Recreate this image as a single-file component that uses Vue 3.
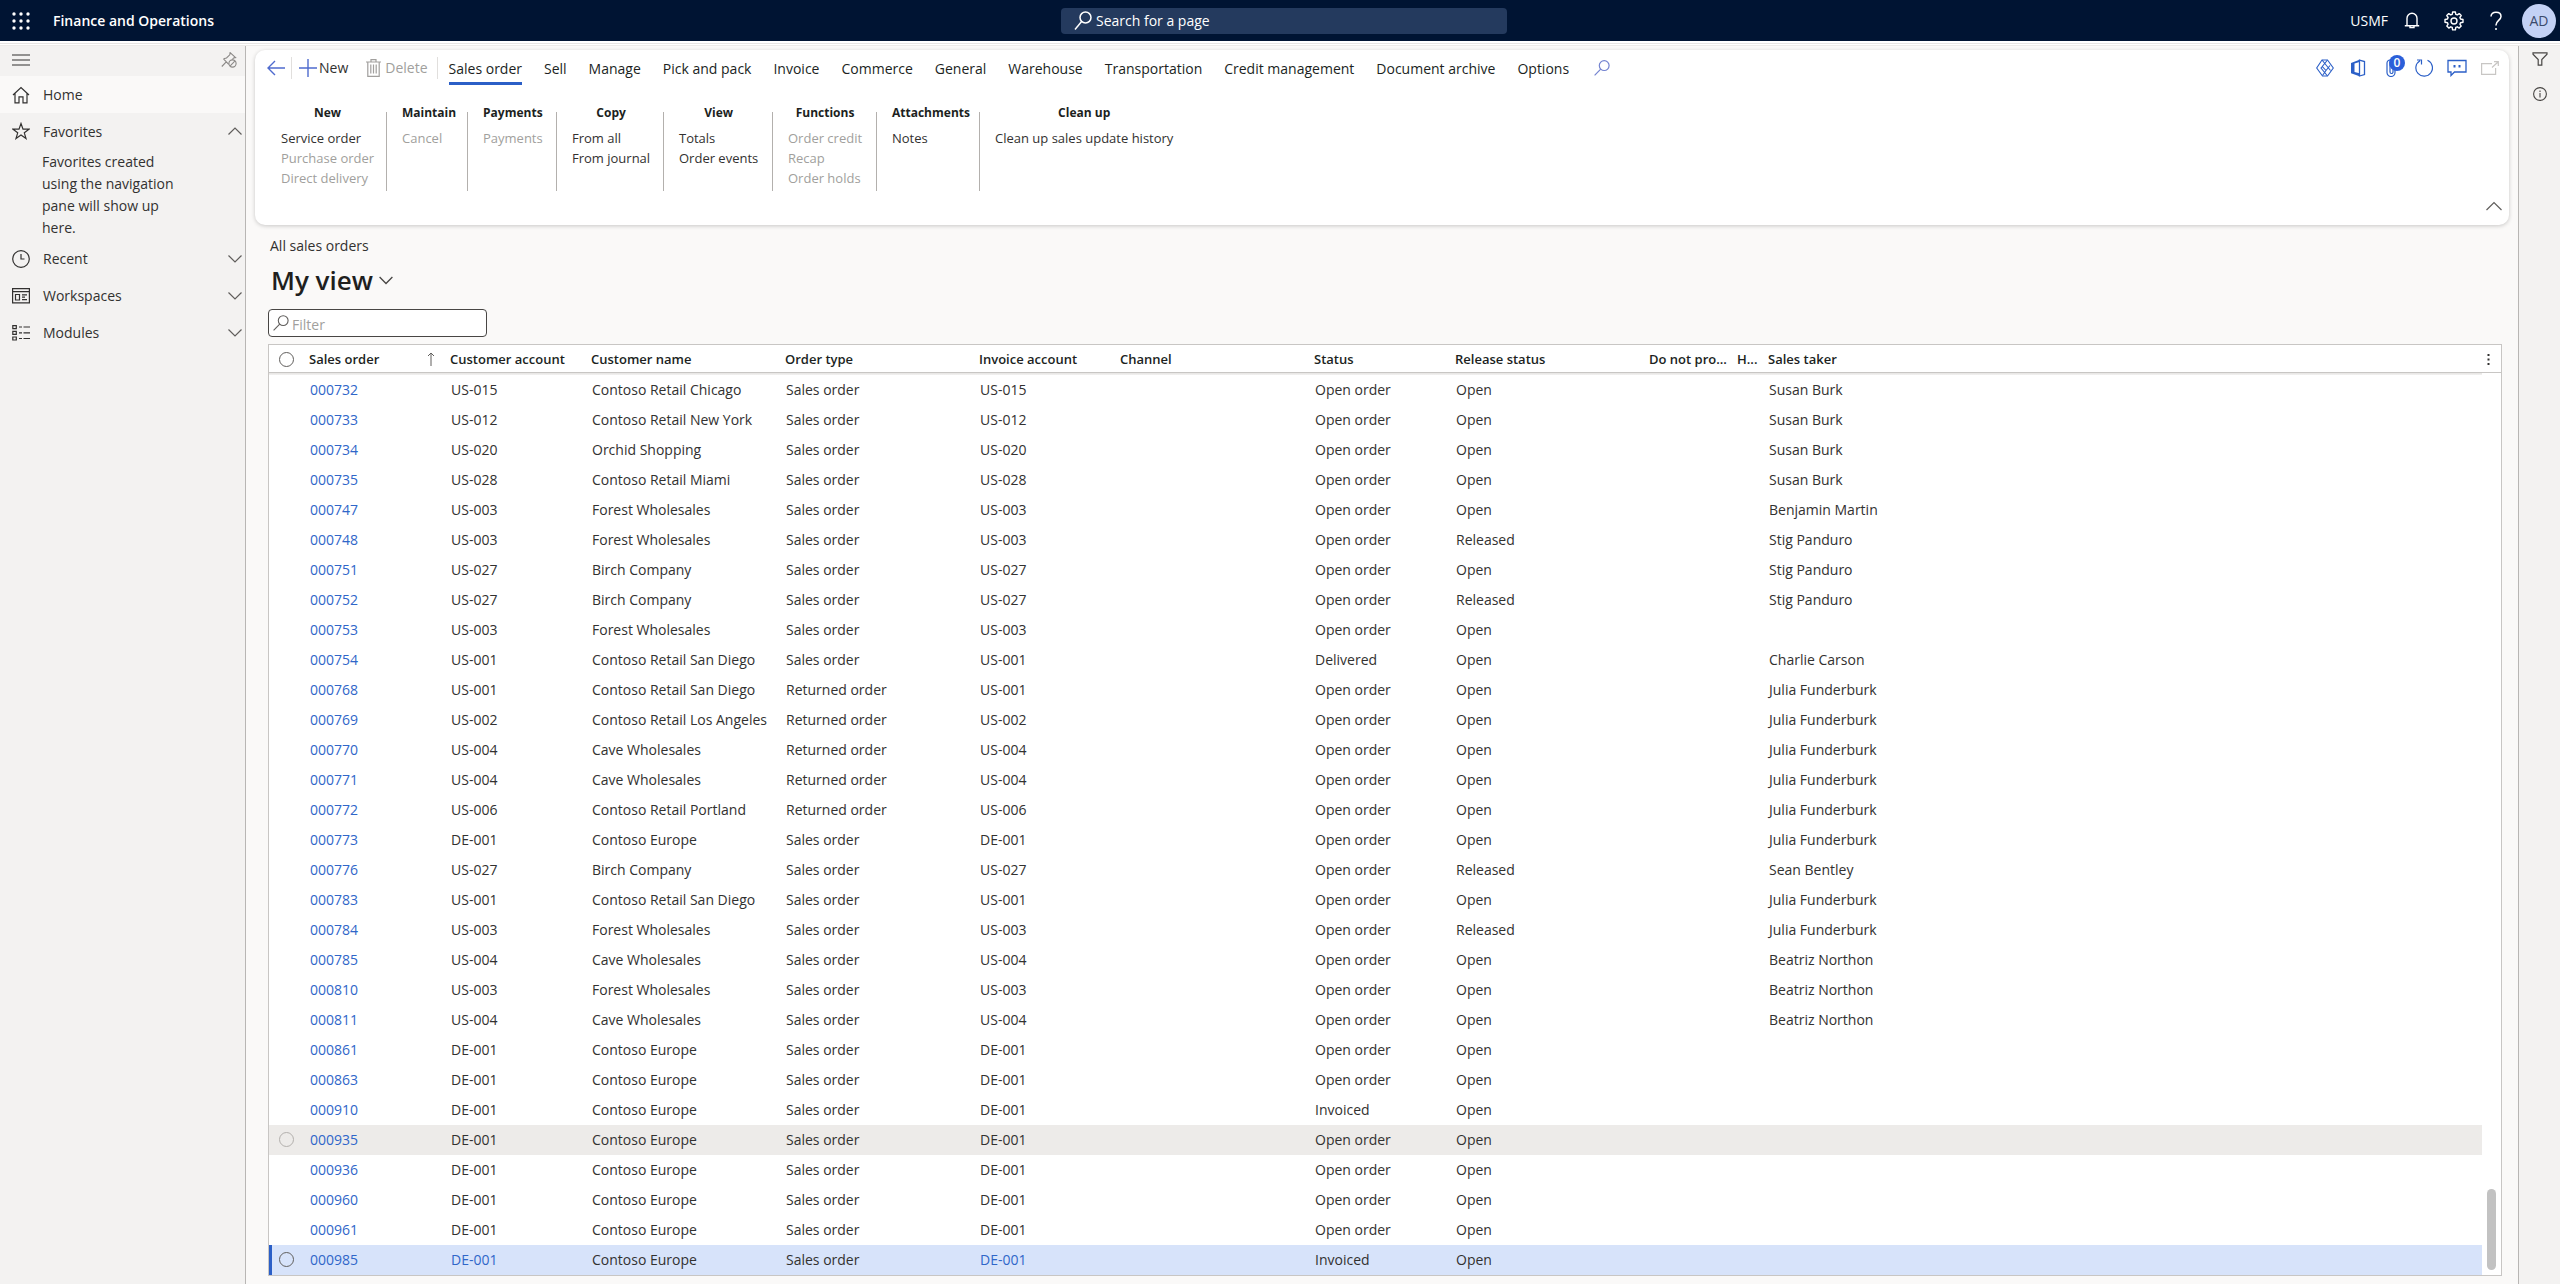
<script setup>
import { ref } from 'vue'

const tabs = ['Sales order', 'Sell', 'Manage', 'Pick and pack', 'Invoice', 'Commerce', 'General', 'Warehouse', 'Transportation', 'Credit management', 'Document archive', 'Options']
const activeTab = ref('Sales order')

const groups = [
  { title: 'New', items: [['Service order', true], ['Purchase order', false], ['Direct delivery', false]] },
  { title: 'Maintain', items: [['Cancel', false]] },
  { title: 'Payments', items: [['Payments', false]] },
  { title: 'Copy', items: [['From all', true], ['From journal', true]] },
  { title: 'View', items: [['Totals', true], ['Order events', true]] },
  { title: 'Functions', items: [['Order credit', false], ['Recap', false], ['Order holds', false]] },
  { title: 'Attachments', items: [['Notes', true]] },
  { title: 'Clean up', items: [['Clean up sales update history', true]] },
]

const S = 'Sales order'
const R = 'Returned order'
const O = 'Open order'
const rows = [
  ['000732', 'US-015', 'Contoso Retail Chicago', S, O, 'Open', 'Susan Burk'],
  ['000733', 'US-012', 'Contoso Retail New York', S, O, 'Open', 'Susan Burk'],
  ['000734', 'US-020', 'Orchid Shopping', S, O, 'Open', 'Susan Burk'],
  ['000735', 'US-028', 'Contoso Retail Miami', S, O, 'Open', 'Susan Burk'],
  ['000747', 'US-003', 'Forest Wholesales', S, O, 'Open', 'Benjamin Martin'],
  ['000748', 'US-003', 'Forest Wholesales', S, O, 'Released', 'Stig Panduro'],
  ['000751', 'US-027', 'Birch Company', S, O, 'Open', 'Stig Panduro'],
  ['000752', 'US-027', 'Birch Company', S, O, 'Released', 'Stig Panduro'],
  ['000753', 'US-003', 'Forest Wholesales', S, O, 'Open', ''],
  ['000754', 'US-001', 'Contoso Retail San Diego', S, 'Delivered', 'Open', 'Charlie Carson'],
  ['000768', 'US-001', 'Contoso Retail San Diego', R, O, 'Open', 'Julia Funderburk'],
  ['000769', 'US-002', 'Contoso Retail Los Angeles', R, O, 'Open', 'Julia Funderburk'],
  ['000770', 'US-004', 'Cave Wholesales', R, O, 'Open', 'Julia Funderburk'],
  ['000771', 'US-004', 'Cave Wholesales', R, O, 'Open', 'Julia Funderburk'],
  ['000772', 'US-006', 'Contoso Retail Portland', R, O, 'Open', 'Julia Funderburk'],
  ['000773', 'DE-001', 'Contoso Europe', S, O, 'Open', 'Julia Funderburk'],
  ['000776', 'US-027', 'Birch Company', S, O, 'Released', 'Sean Bentley'],
  ['000783', 'US-001', 'Contoso Retail San Diego', S, O, 'Open', 'Julia Funderburk'],
  ['000784', 'US-003', 'Forest Wholesales', S, O, 'Released', 'Julia Funderburk'],
  ['000785', 'US-004', 'Cave Wholesales', S, O, 'Open', 'Beatriz Northon'],
  ['000810', 'US-003', 'Forest Wholesales', S, O, 'Open', 'Beatriz Northon'],
  ['000811', 'US-004', 'Cave Wholesales', S, O, 'Open', 'Beatriz Northon'],
  ['000861', 'DE-001', 'Contoso Europe', S, O, 'Open', ''],
  ['000863', 'DE-001', 'Contoso Europe', S, O, 'Open', ''],
  ['000910', 'DE-001', 'Contoso Europe', S, 'Invoiced', 'Open', ''],
  ['000935', 'DE-001', 'Contoso Europe', S, O, 'Open', ''],
  ['000936', 'DE-001', 'Contoso Europe', S, O, 'Open', ''],
  ['000960', 'DE-001', 'Contoso Europe', S, O, 'Open', ''],
  ['000961', 'DE-001', 'Contoso Europe', S, O, 'Open', ''],
  ['000985', 'DE-001', 'Contoso Europe', S, 'Invoiced', 'Open', ''],
].map(([id, account, name, type, status, release, taker]) => ({ id, account, name, type, status, release, taker }))

const hovered = '000935'
const selected = '000985'
</script>

<template>
  <div class="app">
    <header class="topbar">
      <div class="brand">
        <button class="icon-btn waffle" aria-label="App launcher">
          <svg width="18" height="18" viewBox="0 0 18 18" fill="#fff">
            <g v-for="y in [2, 9, 16]" :key="y">
              <circle v-for="x in [2, 9, 16]" :key="x" :cx="x" :cy="y" r="1.7" />
            </g>
          </svg>
        </button>
        <span class="product">Finance and Operations</span>
      </div>
      <label class="page-search">
        <svg width="18" height="20" viewBox="0 0 18 20" fill="none" stroke="#fff" stroke-width="1.5">
          <circle cx="11.5" cy="6.5" r="5.5" /><path d="M7.6 10.6 1 18.5" />
        </svg>
        <input type="text" placeholder="Search for a page" aria-label="Search for a page" />
      </label>
      <div class="top-actions">
        <span class="company">USMF</span>
        <button class="icon-btn" aria-label="Notifications">
          <svg width="16" height="18" viewBox="0 0 16 18" fill="none" stroke="#fff" stroke-width="1.4">
            <path d="M3 13.5V6.2a5 5 0 0 1 10 0v7.3M.8 13.7h14.4M6 14v1.6h4V14" />
          </svg>
        </button>
        <button class="icon-btn" aria-label="Settings">
          <svg width="20" height="20" viewBox="0 0 20 20" fill="none" stroke="#fff" stroke-width="1.4" stroke-linejoin="round">
            <path d="M8.6 1h2.8l.4 2.3 1.5.6 1.9-1.3 2 2-1.3 1.9.6 1.5 2.5.5v2.8l-2.5.4-.6 1.5 1.3 1.9-2 2-1.9-1.3-1.5.6-.4 2.5H8.6l-.4-2.5-1.5-.6-1.9 1.3-2-2 1.3-1.9-.6-1.5L1 11.3V8.500l2.500-.5.6-1.500-1.300-1.900 2-2 1.900 1.300 1.500-.6z" />
            <circle cx="10" cy="10" r="3" />
          </svg>
        </button>
        <button class="icon-btn" aria-label="Help">
          <svg width="12" height="20" viewBox="0 0 12 20" fill="none" stroke="#fff" stroke-width="1.5">
            <path d="M1 5.500C1 2.800 3 1.200 6 1.200s5 1.600 5 4.200c0 3.800-5 4.300-5 8.600v.6M6 17v2" />
          </svg>
        </button>
        <button class="avatar" aria-label="Account">AD</button>
      </div>
    </header>

    <div class="body">
      <nav class="sidebar">
        <div class="nav-top">
          <button class="icon-btn" aria-label="Collapse navigation">
            <svg width="18" height="12" viewBox="0 0 18 12" stroke="#323130" stroke-width="1.2"><path d="M0 1h18M0 6h18M0 11h18" /></svg>
          </button>
          <button class="icon-btn" aria-label="Unpin navigation">
            <svg width="16" height="16" viewBox="0 0 16 16" fill="none" stroke="#8a8886" stroke-width="1.1">
              <path d="M.8 14.500 5.500 9.700M2.500 6.800l3-.8 3.300-3.200.3-2.200 5.500 5-2 .4-1.300 1.500M2.500 6.800l5.200 5.500" />
              <circle cx="11.500" cy="11.500" r="3.600" /><path d="m9.200 13.800 4.600-4.600" />
            </svg>
          </button>
        </div>
        <a class="nav-row home" href="#">
          <svg width="18" height="18" viewBox="0 0 18 18" fill="none" stroke="#323130" stroke-width="1.200">
            <path d="M1 9 9 1.500 17 9M3 7.500v9.300h4v-6h4v6h4V7.500" />
          </svg>
          <span>Home</span>
        </a>
        <button class="nav-row favorites">
          <svg width="18" height="18" viewBox="0 0 18 18" fill="none" stroke="#323130" stroke-width="1.200">
            <path d="m9 1.500 2 5.600 6 .1-4.700 3.600 1.700 5.700L9 13.100l-5 3.400 1.700-5.700L1 7.200l6-.1z" />
          </svg>
          <span>Favorites</span>
          <svg class="chev" width="14" height="8" viewBox="0 0 14 8"><path d="M.5 7.500 7 1l6.500 6.500" /></svg>
        </button>
        <p class="nav-note">Favorites created using the navigation pane will show up here.</p>
        <button class="nav-row">
          <svg width="18" height="18" viewBox="0 0 18 18" fill="none" stroke="#323130" stroke-width="1.200">
            <circle cx="9" cy="9" r="8.300" /><path d="M9 4v5h3.500" />
          </svg>
          <span>Recent</span>
          <svg class="chev" width="14" height="8" viewBox="0 0 14 8"><path d="M.5.5 7 7 13.500.5" /></svg>
        </button>
        <button class="nav-row">
          <svg width="18" height="16" viewBox="0 0 18 16" fill="none" stroke="#323130" stroke-width="1.200">
            <path d="M.6.6h16.800v14.300H.6zM.6 3.700h16.800M3.500 6.500h4v5.500h-4zM10 6.800h5M10 9.200h3M10 11.700h5" />
          </svg>
          <span>Workspaces</span>
          <svg class="chev" width="14" height="8" viewBox="0 0 14 8"><path d="M.5.5 7 7 13.500.5" /></svg>
        </button>
        <button class="nav-row">
          <svg width="18" height="16" viewBox="0 0 18 16" fill="none" stroke="#323130" stroke-width="1.200">
            <path d="M.8.6h3.500v3H.8zM.8 6.300h3.500v3H.8zM.8 12h3.500v3H.8z" />
            <path d="M7 2h3m1.500 0H18M7 7.800h3m1.500 0H18M7 13.500h3m1.500 0H18" />
          </svg>
          <span>Modules</span>
          <svg class="chev" width="14" height="8" viewBox="0 0 14 8"><path d="M.5.5 7 7 13.500.5" /></svg>
        </button>
      </nav>

      <main class="main">
        <section class="ribbon">
          <div class="toolbar">
            <button class="icon-btn back" aria-label="Back">
              <svg width="18" height="16" viewBox="0 0 18 16" fill="none" stroke="#4f6bce" stroke-width="1.400"><path d="M18 8H1M8 1 1 8l7 7" /></svg>
            </button>
            <i class="sep"></i>
            <button class="cmd new">
              <svg width="18" height="18" viewBox="0 0 18 18" stroke="#4f6bce" stroke-width="1.400"><path d="M9 0v18M0 9h18" /></svg>New
            </button>
            <button class="cmd delete" disabled>
              <svg width="15" height="18" viewBox="0 0 15 18" fill="none" stroke="#a19f9d" stroke-width="1.200">
                <path d="M0 3h15M5 3V.7h5V3M1.800 3v14.300h11.400V3M4.800 5.500v9M7.500 5.500v9M10.200 5.500v9" />
              </svg>Delete
            </button>
            <i class="sep"></i>
            <div class="tabs">
              <button v-for="t in tabs" :key="t" class="tab" :class="{ active: t === activeTab }" @click="activeTab = t">{{ t }}</button>
            </div>
            <button class="icon-btn find" aria-label="Search actions">
              <svg width="16" height="16" viewBox="0 0 16 16" fill="none" stroke="#7383d0" stroke-width="1.200"><circle cx="10.200" cy="5.600" r="4.900" /><path d="M6.700 9.200.6 15.400" /></svg>
            </button>
            <div class="right-tools">
              <button class="icon-btn" aria-label="Power Apps">
                <svg width="18" height="18" viewBox="0 0 18 18" fill="none" stroke="#2b5fc7" stroke-width="1.100">
                  <path d="M6 1h5.500L17.300 9l-5.800 8H6.500L.7 9z" />
                  <path d="M6 1 14.500 11.500M11.500 1 6.300 7.500 10 11.500l4-5M6.300 7.500 5 9l6.500 8M10 11.500 6.500 16.500" />
                </svg>
              </button>
              <button class="icon-btn" aria-label="Open in Microsoft Office">
                <svg width="16" height="18" viewBox="0 0 16 18">
                  <path d="M1 4 9.500.8V3L4.500 4.500V13L1 14.300zM1 14.300l3.500-1.300 5 1.300v2.900z" fill="#2b5fc7" />
                  <path d="M9.500 1.200 14.500 2.500v13l-5 1.500z" fill="none" stroke="#2b5fc7" stroke-width="1.300" />
                </svg>
              </button>
              <button class="icon-btn attach" aria-label="Attachments">
                <svg width="18" height="18" viewBox="-4 0 18 18" fill="none" stroke="#2b5fc7" stroke-width="1.200"><path d="M9 4v9.500a4 4 0 0 1-8 0V4a3 3 0 0 1 6 0v9a1.500 1.500 0 0 1-3 0V5" /></svg>
                <span class="badge">0</span>
              </button>
              <button class="icon-btn" aria-label="Refresh">
                <svg width="18" height="18" viewBox="0 0 18 18" fill="none" stroke="#2b5fc7" stroke-width="1.200"><path d="M12.500 1.300A8.300 8.300 0 1 1 5 1.700M2 1h4.500v4.500" /></svg>
              </button>
              <button class="icon-btn" aria-label="Feedback">
                <svg width="20" height="18" viewBox="0 0 20 18" fill="none" stroke="#2b5fc7" stroke-width="1.300"><path d="M1 1.500h18v11.500H7.500L4 16.500V13H1z" /><path d="M7.500 6v2.400M12.500 6v2.400" stroke-width="2" /></svg>
              </button>
              <button class="icon-btn" disabled aria-label="Open in new window">
                <svg width="18" height="14" viewBox="0 0 18 14" fill="none" stroke="#c8c6c4" stroke-width="1.200"><path d="M11 2.600H.6v10.800h14V7M11 6.500 17 1M13 .7h4.300V5" /></svg>
              </button>
            </div>
          </div>

          <div class="groups">
            <div v-for="g in groups" :key="g.title" class="group">
              <div class="group-inner">
                <h2>{{ g.title }}</h2>
                <button v-for="[label, on] in g.items" :key="label" :disabled="!on">{{ label }}</button>
              </div>
            </div>
          </div>
          <div class="ribbon-foot">
            <button class="icon-btn" aria-label="Collapse ribbon">
              <svg class="chev" width="16" height="10" viewBox="0 0 16 10"><path d="M.5 9 8 1.500 15.500 9" /></svg>
            </button>
          </div>
        </section>

        <section class="page">
          <div class="caption">All sales orders</div>
          <h1><button class="view-name">My view<svg width="14" height="9" viewBox="0 0 14 9" fill="none" stroke="#484644" stroke-width="1.300"><path d="M.6 1 7 7.500 13.400 1" /></svg></button></h1>
          <label class="filter">
            <svg width="16" height="16" viewBox="0 0 16 16" fill="none" stroke="#605e5c" stroke-width="1.100"><circle cx="10.200" cy="5.600" r="4.900" /><path d="M6.700 9.200.6 15.400" /></svg>
            <input type="text" placeholder="Filter" aria-label="Filter" />
          </label>

          <div class="grid">
            <table>
              <colgroup>
                <col class="c-check" /><col class="c-s" /><col class="c-s" /><col class="c-l" /><col class="c-l" /><col class="c-s" /><col class="c-l" /><col class="c-s" /><col class="c-l" /><col class="c-hold" /><col class="c-h" /><col /><col class="c-more" />
              </colgroup>
              <thead>
                <tr>
                  <th><input type="checkbox" class="pick" aria-label="Select all rows" /></th>
                  <th>
                    <div class="sorted">Sales order
                      <svg width="8" height="14" viewBox="0 0 8 14" fill="none" stroke="#605e5c" stroke-width="1"><path d="M4 14V1M1 4l3-3 3 3" /></svg>
                    </div>
                  </th>
                  <th>Customer account</th>
                  <th>Customer name</th>
                  <th>Order type</th>
                  <th>Invoice account</th>
                  <th>Channel</th>
                  <th>Status</th>
                  <th>Release status</th>
                  <th>Do not pro...</th>
                  <th>H...</th>
                  <th>Sales taker</th>
                  <th class="more">
                    <button class="icon-btn" aria-label="Grid options">
                      <svg width="3" height="13" viewBox="0 0 3 13" fill="#323130"><path d="M.5 1h2v2h-2zM.5 5.500h2v2h-2zM.5 10h2v2h-2z" /></svg>
                    </button>
                  </th>
                </tr>
              </thead>
              <tbody>
                <tr v-for="r in rows" :key="r.id" :class="{ hovered: r.id === hovered, selected: r.id === selected }">
                  <td><input v-if="r.id === hovered || r.id === selected" type="checkbox" class="pick" :aria-label="'Select ' + r.id" /></td>
                  <td><a href="#">{{ r.id }}</a></td>
                  <td><a v-if="r.id === selected" href="#">{{ r.account }}</a><template v-else>{{ r.account }}</template></td>
                  <td>{{ r.name }}</td>
                  <td>{{ r.type }}</td>
                  <td><a v-if="r.id === selected" href="#">{{ r.account }}</a><template v-else>{{ r.account }}</template></td>
                  <td></td>
                  <td>{{ r.status }}</td>
                  <td>{{ r.release }}</td>
                  <td></td>
                  <td></td>
                  <td>{{ r.taker }}</td>
                  <td></td>
                </tr>
              </tbody>
            </table>
            <div class="thumb"></div>
          </div>
        </section>
      </main>

      <aside class="rail">
        <button class="icon-btn" aria-label="Show filters">
          <svg width="16" height="14" viewBox="0 0 16 14" fill="none" stroke="#484644" stroke-width="1.200"><path d="M1 .8h14v1.400L9.800 7.500v5.700H6.200V7.500L1 2.200z" /></svg>
        </button>
        <button class="icon-btn" aria-label="Related information">
          <svg width="14" height="14" viewBox="0 0 14 14" fill="none" stroke="#484644" stroke-width="1.100"><circle cx="7" cy="7" r="6.400" /><path d="M7 6v4.500M7 3.500V5" /></svg>
        </button>
      </aside>
    </div>
  </div>
</template>

<style>
body {
  background: #faf9f8;
}
</style>

<style scoped>
* {
  box-sizing: border-box;
}
.app {
  min-height: 100vh;
  display: flex;
  flex-direction: column;
  font-family: "Open Sans", "Noto Sans", sans-serif;
  font-size: 14px;
  line-height: 20px;
  color: #323130;
}
button,
input {
  font: inherit;
  color: inherit;
  background: none;
  border: 0;
  margin: 0;
  padding: 0;
}
svg {
  flex: none;
  display: block;
}
a {
  color: #2f66c9;
  text-decoration: none;
}
.icon-btn {
  display: flex;
  align-items: center;
  justify-content: center;
}
.chev {
  fill: none;
  stroke: #605e5c;
  stroke-width: 1.2;
}

.topbar {
  position: relative;
  z-index: 1;
  height: 41px;
  display: grid;
  grid-template-columns: 1fr 446px 1fr;
  align-items: center;
  background: #001433;
  color: #fff;
  padding: 0 4px 0 12px;
  box-shadow: 0 2px 0 #fff, 0 3px 0 #e6e4e2, 0 4px 0 #fff, 0 5px 0 #edebe9;
}
.brand {
  display: flex;
  align-items: center;
}
.waffle {
  width: 18px;
}
.product {
  padding-left: 23px;
  font-weight: 600;
}
.page-search {
  height: 26px;
  display: flex;
  align-items: center;
  gap: 4px;
  padding-left: 13px;
  border-radius: 4px;
  background: #243a5e;
}
.page-search input {
  flex: 1;
}
.page-search input::placeholder {
  color: #fff;
  opacity: 1;
}
.top-actions {
  display: flex;
  justify-content: flex-end;
  align-items: center;
}
.top-actions .icon-btn {
  width: 42px;
}
.company {
  margin-right: 3px;
}
.avatar {
  width: 34px;
  height: 34px;
  margin-left: 5px;
  border-radius: 50%;
  background: #c3d1f5;
  color: #3b4a6b;
}

.body {
  flex: 1;
  display: flex;
  align-items: stretch;
}
.sidebar {
  width: 246px;
  flex: none;
  background: #f3f2f1;
  border-right: 1px solid #b8b6b4;
}
.nav-top {
  height: 35px;
  display: flex;
  align-items: center;
  justify-content: space-between;
  padding: 2px 8px 0 12px;
}
.nav-row {
  width: 100%;
  height: 37px;
  display: flex;
  align-items: center;
  gap: 13px;
  padding: 0 3px 0 12px;
  text-align: left;
  color: #323130;
}
.nav-row span {
  flex: 1;
  padding-top: 1px;
}
.home {
  background: #faf9f8;
}
.favorites {
  height: 36px;
}
.nav-note {
  margin: 0;
  padding: 2px 60px 1px 42px;
  line-height: 22px;
}

.main {
  flex: 1;
  min-width: 0;
  padding: 9px 9px 0;
}
.ribbon {
  height: 175px;
  background: #fff;
  border-radius: 10px;
  box-shadow: 0 1px 4px rgba(0, 0, 0, 0.2);
}
.toolbar {
  height: 35px;
  display: flex;
  align-items: center;
  padding: 0 3px 0 12px;
}
.sep {
  width: 1px;
  height: 22px;
  background: #e1dfdd;
}
.back {
  margin-right: 6px;
}
.cmd {
  display: flex;
  align-items: center;
  gap: 2px;
  padding-top: 1px;
}
.new {
  margin: 0 18px 0 7px;
}
.delete {
  gap: 4px;
  margin-right: 9px;
  color: #a19f9d;
}
.tabs {
  display: flex;
  gap: 22px;
  padding-left: 11px;
  align-self: stretch;
}
.tab {
  padding: 7px 0 2px;
  border-bottom: 3px solid transparent;
  color: #201f1e;
}
.tab.active {
  border-bottom-color: #2b5fc7;
}
.find {
  margin-left: 25px;
}
.right-tools {
  margin-left: auto;
  display: flex;
}
.right-tools .icon-btn {
  width: 33px;
}
.attach {
  position: relative;
}
.badge {
  position: absolute;
  top: -4px;
  left: 15px;
  width: 16px;
  height: 16px;
  border-radius: 50%;
  background: #2b5fd9;
  color: #fff;
  font-size: 12px;
  font-weight: 600;
  line-height: 16px;
}
.groups {
  height: 106px;
  display: grid;
  grid-template-columns: 121px 81px 89px 107px 109px 104px 103px auto;
  justify-content: start;
  padding: 17px 0 0 11px;
}
.group {
  display: flex;
  padding: 1px 0 0 15px;
  background: linear-gradient(#b3b0ad, #b3b0ad) right bottom / 1px 79px no-repeat;
}
.group:last-child {
  background: none;
}
.group-inner {
  display: flex;
  flex-direction: column;
  align-items: flex-start;
  white-space: nowrap;
  font-size: 13px;
}
.group h2 {
  margin: 0 0 5px;
  align-self: center;
  font-size: 12px;
  font-weight: 700;
  color: #201f1e;
}
.group button:disabled {
  color: #a19f9d;
}
.ribbon-foot {
  display: flex;
  justify-content: flex-end;
  padding: 10px 7px 0 0;
}

.page {
  padding: 11px 7px 0 13px;
}
.caption {
  padding-left: 2px;
}
h1 {
  margin: 6px 0 11px;
  font-size: 26px;
  line-height: 36px;
  font-weight: 600;
  color: #201f1e;
}
.view-name {
  display: flex;
  align-items: center;
  gap: 6px;
  padding-left: 3px;
}
.filter {
  width: 219px;
  height: 28px;
  display: flex;
  align-items: center;
  gap: 3px;
  padding-left: 4px;
  border: 1px solid #484644;
  border-radius: 4px;
  background: #fff;
}
.filter input {
  flex: 1;
  min-width: 0;
  padding-top: 3px;
}
.filter input::placeholder {
  color: #a19f9d;
  opacity: 1;
}
.grid {
  position: relative;
  margin-top: 7px;
  border: 1px solid #c8c6c4;
  background: #fff;
}
table {
  width: 100%;
  table-layout: fixed;
  border-spacing: 0;
}
.c-check { width: 40px; }
.c-s { width: 141px; }
.c-l { width: 194px; }
.c-hold { width: 88px; }
.c-h { width: 31px; }
.c-more { width: 19px; }
th,
td {
  padding: 0 0 0 1px;
  text-align: left;
  white-space: nowrap;
}
th {
  height: 30px;
  padding: 0 0 2px;
  font-size: 13px;
  font-weight: 600;
  color: #201f1e;
  background: linear-gradient(#fff 27px, #c8c6c4 27px 28px, #e6e4e2 28px, #f3f2f1);
}
th.more {
  background: linear-gradient(#fff 27px, #c8c6c4 27px 28px, #fff 28px);
}
.more .icon-btn {
  width: 12px;
}
.sorted {
  display: flex;
  align-items: center;
  justify-content: space-between;
  padding-right: 15px;
}
td {
  height: 30px;
  padding-bottom: 1px;
}
td:first-child {
  padding-left: 0;
}
.pick {
  appearance: none;
  display: block;
  width: 15px;
  height: 15px;
  margin-left: 10px;
  border: 1px solid #605e5c;
  border-radius: 50%;
}
.hovered td:not(:last-child) {
  background: #edebe9;
}
.hovered .pick {
  border-color: #b3b0ad;
}
.selected td:not(:last-child) {
  background: #d7e3fa;
}
.selected td:first-child {
  box-shadow: inset 3px 0 #2b5fc7;
}
.thumb {
  position: absolute;
  right: 5px;
  bottom: 5px;
  width: 9px;
  height: 81px;
  border-radius: 5px;
  background: #c2c2c2;
}

.rail {
  width: 42px;
  flex: none;
  display: flex;
  flex-direction: column;
  align-items: center;
  gap: 21px;
  padding-top: 11px;
  background: #f3f2f1;
  border-left: 1px solid #b8b6b4;
}
</style>
